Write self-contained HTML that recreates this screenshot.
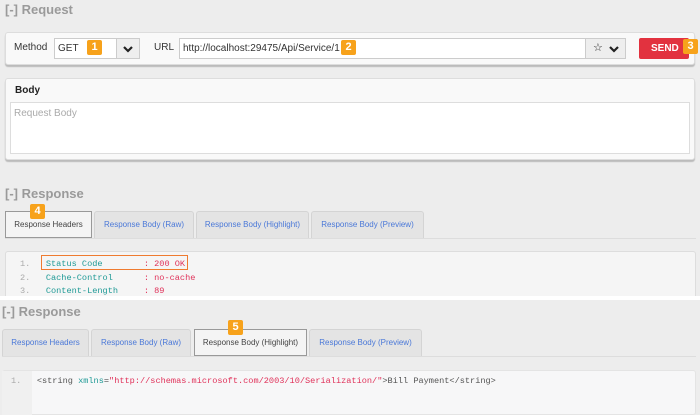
<!DOCTYPE html>
<html><head><style>
*{margin:0;padding:0;box-sizing:border-box}
body{width:700px;height:411px;background:#ededed;font-family:"Liberation Sans",sans-serif;position:relative;overflow:hidden}
.a{position:absolute}
.h{font-weight:bold;color:#9a9a9a;font-size:13px}
.panel{background:#f9f9f9;border:1px solid #ddd;border-radius:3px;box-shadow:0 2px 1px #bbb}
.badge{background:#f7a21b;color:#fff;font-size:11px;font-weight:bold;text-align:center;line-height:15px;border-radius:2px;width:15px;height:15px}
.tab{top:0;height:27px;border:1px solid #d4d4d4;border-bottom:none;background:#e4e4e4;border-radius:3px 3px 0 0;font-size:8px;color:#4a78d8;text-align:center;line-height:26px}
.tab.act{background:#f4f4f4;border:1px solid #999;color:#444;border-radius:0}
.mono{font-family:"Liberation Mono",monospace;font-size:8.6px}
.teal{color:#1f9a96}.red{color:#e0325a}.ln{color:#aaa}
</style></head><body>
<div class="a h" style="left:5px;top:2px">[-] Request</div>
<div class="a panel" style="left:5px;top:32px;width:690px;height:33px"></div>
<div class="a" style="left:14px;top:42px;font-size:10px;color:#333">Method</div>
<div class="a" style="left:54px;top:38px;width:86px;height:21px;background:#fff;border:1px solid #ccc"></div>
<div class="a" style="left:116px;top:38px;width:24px;height:21px;background:#eee;border:1px solid #ccc"><svg width="22" height="19"><path d="M7 8l4 4 4-4" stroke="#222" stroke-width="2.2" fill="none"/></svg></div>
<div class="a" style="left:58px;top:43px;font-size:10px;color:#333">GET</div>
<div class="a badge" style="left:87px;top:40px">1</div>
<div class="a" style="left:154px;top:42px;font-size:10px;color:#333">URL</div>
<div class="a" style="left:179px;top:38px;width:447px;height:21px;background:#fff;border:1px solid #ccc"></div>
<div class="a" style="left:585px;top:38px;width:41px;height:21px;background:#eee;border:1px solid #ccc;font-size:11px;line-height:19px;padding-left:7px;color:#222">☆<svg width="14" height="19" style="position:absolute;left:22px;top:0"><path d="M2 8l4 4 4-4" stroke="#222" stroke-width="2.2" fill="none"/></svg></div>
<div class="a" style="left:183px;top:43px;font-size:10px;color:#333">http://localhost:29475/Api/Service/1</div>
<div class="a badge" style="left:341px;top:40px">2</div>
<div class="a" style="left:639px;top:38px;width:50px;height:21px;background:#e2323f;border-radius:2px;color:#fff;font-size:10px;font-weight:bold;line-height:21px;padding-left:12px">SEND</div>
<div class="a badge" style="left:683px;top:39px">3</div>
<div class="a panel" style="left:5px;top:78px;width:690px;height:82px"></div>
<div class="a" style="left:15px;top:85px;font-size:10px;font-weight:bold;color:#222">Body</div>
<div class="a" style="left:10px;top:102px;width:680px;height:52px;background:#fff;border:1px solid #ddd"></div>
<div class="a" style="left:14px;top:108px;font-size:10px;color:#aaa">Request Body</div>

<div class="a h" style="left:5px;top:186px">[-] Response</div>
<div class="a" style="left:5px;top:211px;width:691px;height:28px;border-bottom:1px solid #ddd">
<div class="a tab act" style="left:0;width:87px">Response Headers</div>
<div class="a tab" style="left:89px;width:100px">Response Body (Raw)</div>
<div class="a tab" style="left:191px;width:113px">Response Body (Highlight)</div>
<div class="a tab" style="left:306px;width:113px">Response Body (Preview)</div>
</div>
<div class="a badge" style="left:30px;top:204px">4</div>
<div class="a" style="left:5px;top:251px;width:691px;height:50px;background:#f5f5f5;border:1px solid #ddd;border-radius:3px"></div>
<div class="a mono" style="left:20px;top:258px;line-height:13.5px;white-space:pre"><span class="ln">1.</span>   <span class="teal">Status Code        </span><span class="red">: 200 OK</span>
<span class="ln">2.</span>   <span class="teal">Cache-Control      </span><span class="red">: no-cache</span>
<span class="ln">3.</span>   <span class="teal">Content-Length     </span><span class="red">: 89</span></div>
<div class="a" style="left:41px;top:255px;width:147px;height:15px;border:1px solid #ef7b30"></div>

<div class="a" style="left:0;top:296px;width:700px;height:115px;background:#ededed;border-top:4px solid #fff"></div>
<div class="a h" style="left:2px;top:304px">[-] Response</div>
<div class="a" style="left:2px;top:329px;width:694px;height:28px;border-bottom:1px solid #ddd">
<div class="a tab" style="left:0;width:87px">Response Headers</div>
<div class="a tab" style="left:89px;width:100px">Response Body (Raw)</div>
<div class="a tab act" style="left:192px;width:113px">Response Body (Highlight)</div>
<div class="a tab" style="left:307px;width:113px">Response Body (Preview)</div>
</div>
<div class="a badge" style="left:228px;top:320px">5</div>
<div class="a" style="left:2px;top:370px;width:694px;height:45px;background:#f7f7f8;border:1px solid #e4e4e4;border-radius:3px"></div>
<div class="a" style="left:2px;top:371px;width:30px;height:44px;background:#f0f0f0"></div>
<div class="a mono" style="left:11px;top:376px;white-space:pre"><span class="ln">1.</span>   <span style="color:#555">&lt;string </span><span class="teal">xmlns</span><span style="color:#555">=</span><span class="red">"http://schemas.microsoft.com/2003/10/Serialization/"</span><span style="color:#555">&gt;Bill Payment&lt;/string&gt;</span></div>
</body></html>
